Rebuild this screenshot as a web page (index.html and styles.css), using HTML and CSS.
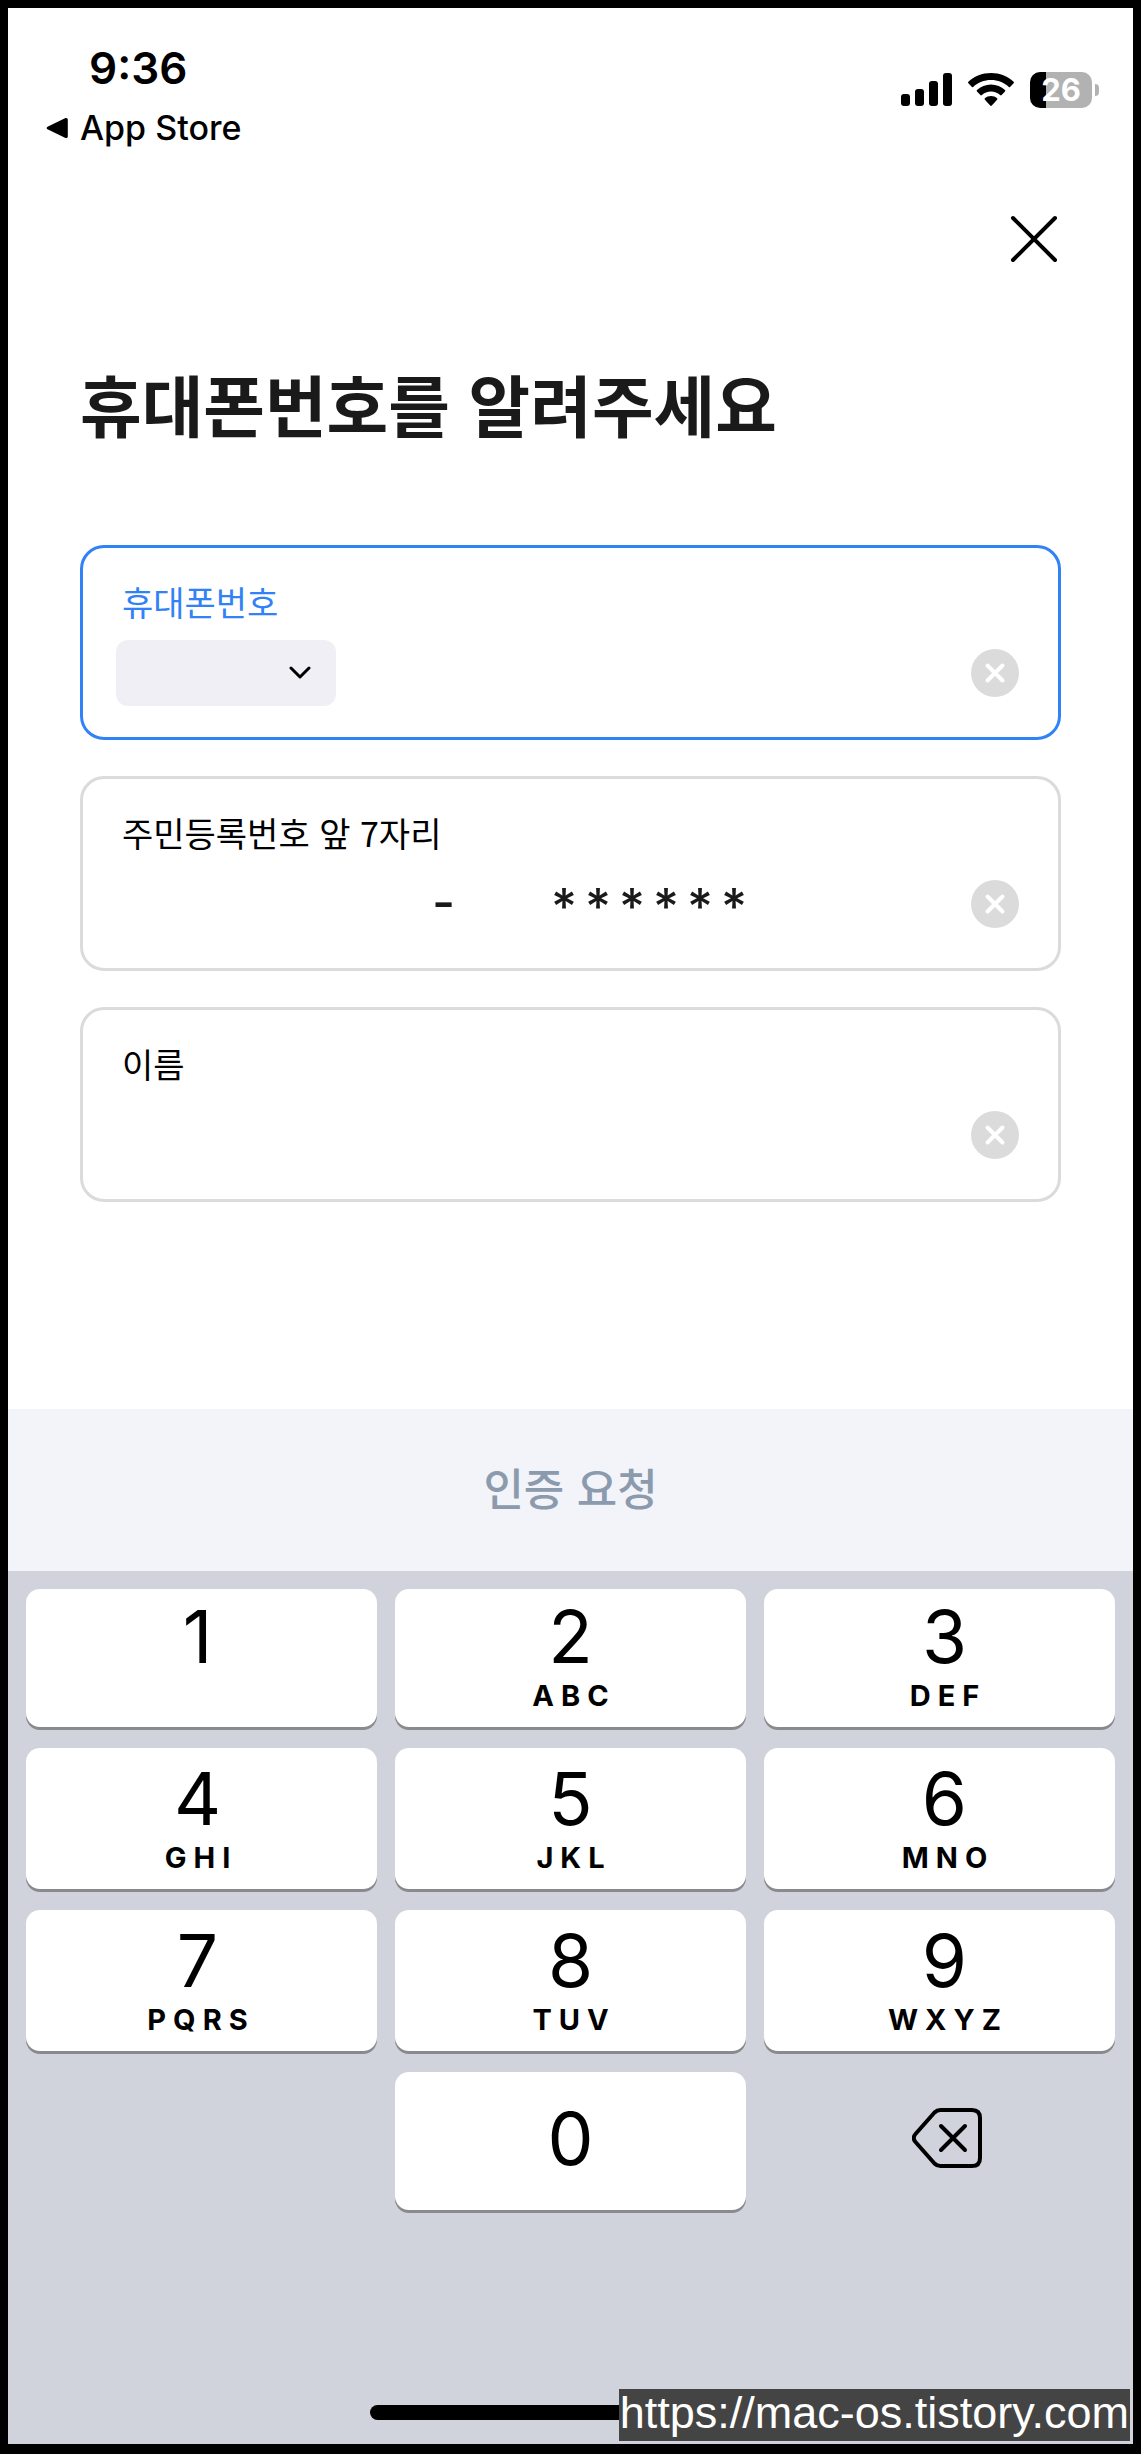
FILE: index.html
```html
<!DOCTYPE html>
<html lang="ko">
<head>
    <meta charset="UTF-8">
    <meta name="viewport" content="width=device-width, initial-scale=1.0">
    <title>휴대폰번호를 알려주세요</title>
    <link rel="stylesheet" href="styles.css">
</head>
<body>
    <div class="phone">
        <header class="status-bar">
            <div class="status-left">
                <span class="time">9:36</span>
                <a href="#" class="back-link">
                    <svg width="22" height="22" viewBox="0 0 22 22" aria-hidden="true"><path d="M2 9.4 19 1.2c1.5-.7 2.8 0 2.8 1.6v16.4c0 1.6-1.300 2.300-2.800 1.600L2 12.600c-1.800-.9-1.800-2.300 0-3.200z"/></svg>
                    <span>App Store</span>
                </a>
            </div>
            <div class="status-icons">
                <svg width="51" height="34" viewBox="0 0 51 34" aria-hidden="true">
                    <rect x="0" y="21" width="9" height="12" rx="3"/>
                    <rect x="14" y="16" width="9" height="17" rx="3"/>
                    <rect x="28" y="8" width="9" height="25" rx="3"/>
                    <rect x="42" y="0" width="9" height="33" rx="3"/>
                </svg>
                <svg width="46" height="34" viewBox="0 0 46 34" aria-hidden="true">
                    <path d="M23 0C14.300 0 6.300 3.300.4 8.800c-.5.5-.5 1 0 1.500l3.300 3.500c.5.5 1 .5 1.500.1C10 9.500 16.200 7 23 7s13 2.500 17.800 6.900c.5.400 1 .4 1.500-.1l3.300-3.500c.5-.5.5-1 0-1.500C39.700 3.300 31.700 0 23 0z"/>
                    <path d="M23 11.500c-5.400 0-10.300 2.100-14 5.500-.5.5-.5 1 0 1.500l3.400 3.500c.5.5 1 .5 1.500 0 2.400-2.200 5.600-3.500 9.100-3.500s6.700 1.300 9.100 3.500c.5.5 1 .5 1.500 0l3.400-3.500c.5-.5.5-1 0-1.500-3.700-3.400-8.600-5.500-14-5.500z"/>
                    <path d="M23 23c-2.300 0-4.500.9-6.100 2.300-.5.500-.5 1 0 1.500l5.300 5.700c.5.500 1.100.5 1.600 0l5.300-5.700c.5-.5.5-1 0-1.500C27.500 23.900 25.300 23 23 23z"/>
                </svg>
                <div class="battery">
                    <span class="battery-level">26</span>
                    <span class="battery-cap"></span>
                </div>
            </div>
        </header>

        <main class="content">
            <button type="button" class="close-btn" aria-label="닫기">
                <svg width="53" height="52" viewBox="0 0 53 52" aria-hidden="true"><path d="M5 5l42 42M47 5 5 47"/></svg>
            </button>

            <h1>휴대폰번호를 알려주세요</h1>

            <form id="verifyForm" class="fields">
                <div class="field active">
                    <label for="phone">휴대폰번호</label>
                    <div class="field-row">
                        <div class="carrier">
                            <select name="carrier" aria-label="통신사">
                                <option value=""></option>
                            </select>
                            <svg width="22" height="14" viewBox="0 0 22 14" aria-hidden="true"><path d="M2 2l9 9 9-9"/></svg>
                        </div>
                        <input type="tel" id="phone" name="phone">
                        <button type="button" class="clear-btn" aria-label="휴대폰번호 지우기">
                            <svg width="48" height="48" viewBox="0 0 48 48" aria-hidden="true"><circle cx="24" cy="24" r="24"/><path d="M16.500 16.500l15 15M31.500 16.500l-15 15"/></svg>
                        </button>
                    </div>
                </div>

                <div class="field">
                    <label for="birth">주민등록번호 앞 7자리</label>
                    <div class="field-row">
                        <input type="text" id="birth" name="birth" class="birth" inputmode="numeric" maxlength="6">
                        <span class="dash">-</span>
                        <input type="text" name="gender" class="gender" inputmode="numeric" maxlength="1" aria-label="주민등록번호 7번째 자리">
                        <div class="mask">
                            <span>*</span><span>*</span><span>*</span><span>*</span><span>*</span><span>*</span>
                        </div>
                        <button type="button" class="clear-btn" aria-label="주민등록번호 지우기">
                            <svg width="48" height="48" viewBox="0 0 48 48" aria-hidden="true"><circle cx="24" cy="24" r="24"/><path d="M16.500 16.500l15 15M31.500 16.500l-15 15"/></svg>
                        </button>
                    </div>
                </div>

                <div class="field">
                    <label for="name">이름</label>
                    <div class="field-row">
                        <input type="text" id="name" name="name">
                        <button type="button" class="clear-btn" aria-label="이름 지우기">
                            <svg width="48" height="48" viewBox="0 0 48 48" aria-hidden="true"><circle cx="24" cy="24" r="24"/><path d="M16.500 16.500l15 15M31.500 16.500l-15 15"/></svg>
                        </button>
                    </div>
                </div>
            </form>
        </main>

        <button type="submit" form="verifyForm" class="submit-btn">인증 요청</button>

        <div class="keyboard">
            <div class="keys">
                <button type="button" class="key">1<small></small></button>
                <button type="button" class="key">2<small>ABC</small></button>
                <button type="button" class="key">3<small>DEF</small></button>
                <button type="button" class="key">4<small>GHI</small></button>
                <button type="button" class="key">5<small>JKL</small></button>
                <button type="button" class="key">6<small>MNO</small></button>
                <button type="button" class="key">7<small>PQRS</small></button>
                <button type="button" class="key">8<small>TUV</small></button>
                <button type="button" class="key">9<small>WXYZ</small></button>
                <button type="button" class="key zero">0</button>
                <button type="button" class="delete" aria-label="삭제">
                    <svg width="70" height="60" viewBox="0 0 70 60" aria-hidden="true">
                        <path d="M28.500 2H60q8 0 8 8v40q0 8-8 8H28.500q-3.500 0-6-2.500L3.500 34q-3.500-4 0-8L22.500 4.500Q25 2 28.500 2z"/>
                        <path d="M29 18l24 24M53 18 29 42"/>
                    </svg>
                </button>
            </div>
            <div class="home-indicator"></div>
        </div>

        <div class="watermark">https://mac-os.tistory.com</div>
    </div>
</body>
</html>
```
FILE: styles.css
```css
* {
    margin: 0;
    padding: 0;
    box-sizing: border-box;
}

body {
    font-family: 'Inter', 'Noto Sans CJK KR', sans-serif;
    background-color: #000;
    color: #000;
}

button,
input,
select {
    font: inherit;
    color: inherit;
    border: none;
    background: none;
    outline: none;
}

button {
    cursor: pointer;
}

svg {
    display: block;
}

.phone {
    position: relative;
    min-height: 100vh;
    display: flex;
    flex-direction: column;
    background-color: #fff;
    border: 8px solid #000;
    border-bottom-width: 10px;
}

/* Status bar */
.status-bar {
    display: flex;
    justify-content: space-between;
    padding: 36px 34px 0 38px;
}

.status-left {
    display: flex;
    flex-direction: column;
    gap: 16px;
}

.time {
    padding-left: 43px;
    font-size: 44px;
    font-weight: 600;
    line-height: 48px;
}

.back-link {
    display: flex;
    align-items: center;
    gap: 12px;
    font-size: 34px;
    font-weight: 500;
    line-height: 40px;
    color: #000;
    text-decoration: none;
}

.status-icons {
    display: flex;
    align-items: center;
    gap: 16px;
    height: 36px;
    margin-top: 28px;
}

.battery {
    display: flex;
    align-items: center;
    gap: 3px;
}

.battery-level {
    width: 62px;
    border-radius: 10px;
    background: linear-gradient(to right, #000 26%, #b2b2b2 26%);
    color: #fff;
    font-size: 31px;
    font-weight: 700;
    line-height: 36px;
    text-align: center;
}

.battery-cap {
    width: 4px;
    height: 12px;
    border-radius: 0 6px 6px 0;
    background-color: #b2b2b2;
}

/* Form */
.content {
    display: flex;
    flex-direction: column;
    flex: 1;
    padding: 65px 72px 0;
    font-family: 'Noto Sans CJK KR', sans-serif;
}

.close-btn {
    align-self: flex-end;
}

.close-btn path {
    fill: none;
    stroke: #000;
    stroke-width: 4;
    stroke-linecap: round;
}

h1 {
    margin: 94px 0 98px;
    font-size: 67px;
    font-weight: 700;
    line-height: 88px;
    color: #1a1a1a;
}

.fields {
    display: flex;
    flex-direction: column;
    gap: 36px;
}

.field {
    display: flex;
    flex-direction: column;
    gap: 14px;
    padding: 30px 39px 31px 33px;
    border: 3px solid #dbdbdb;
    border-radius: 24px;
}

.field label {
    padding-left: 6px;
    font-size: 34px;
    line-height: 48px;
}

.field.active {
    border-color: #3182f6;
}

.field.active label {
    color: #3182f6;
}

.field-row {
    display: flex;
    align-items: center;
    height: 66px;
    font-size: 40px;
    font-weight: 500;
    color: #1a1a1a;
}

.field-row input {
    flex: 1;
    min-width: 0;
    height: 66px;
    padding: 0 6px;
}

.carrier {
    display: grid;
    align-items: center;
    width: 220px;
    border-radius: 12px;
    background-color: #f0eff5;
}

.carrier select,
.carrier svg {
    grid-area: 1 / 1;
}

.carrier select {
    appearance: none;
    height: 66px;
    padding: 0 56px 0 20px;
}

.carrier svg {
    justify-self: end;
    margin-right: 25px;
    pointer-events: none;
}

.carrier path {
    fill: none;
    stroke: #000;
    stroke-width: 3;
    stroke-linecap: round;
    stroke-linejoin: round;
}

.field-row .birth {
    flex: 0 1 316px;
}

.field-row .gender {
    flex: 0 1 92px;
}

.dash,
.mask {
    font-family: 'Inter', sans-serif;
    font-size: 50px;
    line-height: 48px;
}

.dash {
    padding-bottom: 4px;
}

.mask {
    display: flex;
    flex: 1;
    padding-top: 4px;
}

.mask span {
    display: flex;
    justify-content: center;
    width: 34px;
}

.clear-btn circle {
    fill: #dbdbdb;
}

.clear-btn path {
    stroke: #fff;
    stroke-width: 4;
    stroke-linecap: round;
}

.submit-btn {
    height: 162px;
    padding-bottom: 6px;
    background-color: #f3f4f9;
    color: #8b9bad;
    font-family: 'Noto Sans CJK KR', sans-serif;
    font-size: 44px;
    font-weight: 500;
}

/* Keyboard */
.keyboard {
    padding: 18px 18px 24px;
    background-color: #d0d3dc;
}

.keys {
    display: grid;
    grid-template-columns: repeat(3, 1fr);
    grid-template-rows: 138px 141px 141px 138px;
    gap: 21px 18px;
}

.key {
    display: flex;
    flex-direction: column;
    align-items: center;
    justify-content: flex-end;
    padding-bottom: 13px;
    border-radius: 14px;
    background-color: #fff;
    box-shadow: 0 3px 0 #898a8d;
    font-size: 73px;
    line-height: 82px;
}

/* outer columns lean towards the screen edges */
.key:nth-child(3n + 1) {
    padding-right: 8px;
}

.key:nth-child(3n) {
    padding-left: 10px;
}

.key small {
    height: 36px;
    padding-left: 7px;
    font-size: 29px;
    font-weight: 700;
    line-height: 36px;
    letter-spacing: 7px;
}

.key.zero {
    grid-column: 2;
    justify-content: center;
    padding: 0 0 4px;
}

.delete {
    display: flex;
    align-items: center;
    justify-content: center;
    padding: 0 0 6px 14px;
}

.delete path {
    fill: none;
    stroke: #000;
    stroke-width: 4;
    stroke-linecap: round;
    stroke-linejoin: round;
}

.home-indicator {
    width: 402px;
    height: 15px;
    margin: 195px auto 0;
    border-radius: 8px;
    background-color: #000;
}

.watermark {
    position: absolute;
    right: 3px;
    bottom: 3px;
    padding: 0 1px 4px;
    background-color: #444;
    color: #fff;
    font-family: 'Liberation Sans', Arial, sans-serif;
    font-size: 45px;
    line-height: 48px;
}
```
